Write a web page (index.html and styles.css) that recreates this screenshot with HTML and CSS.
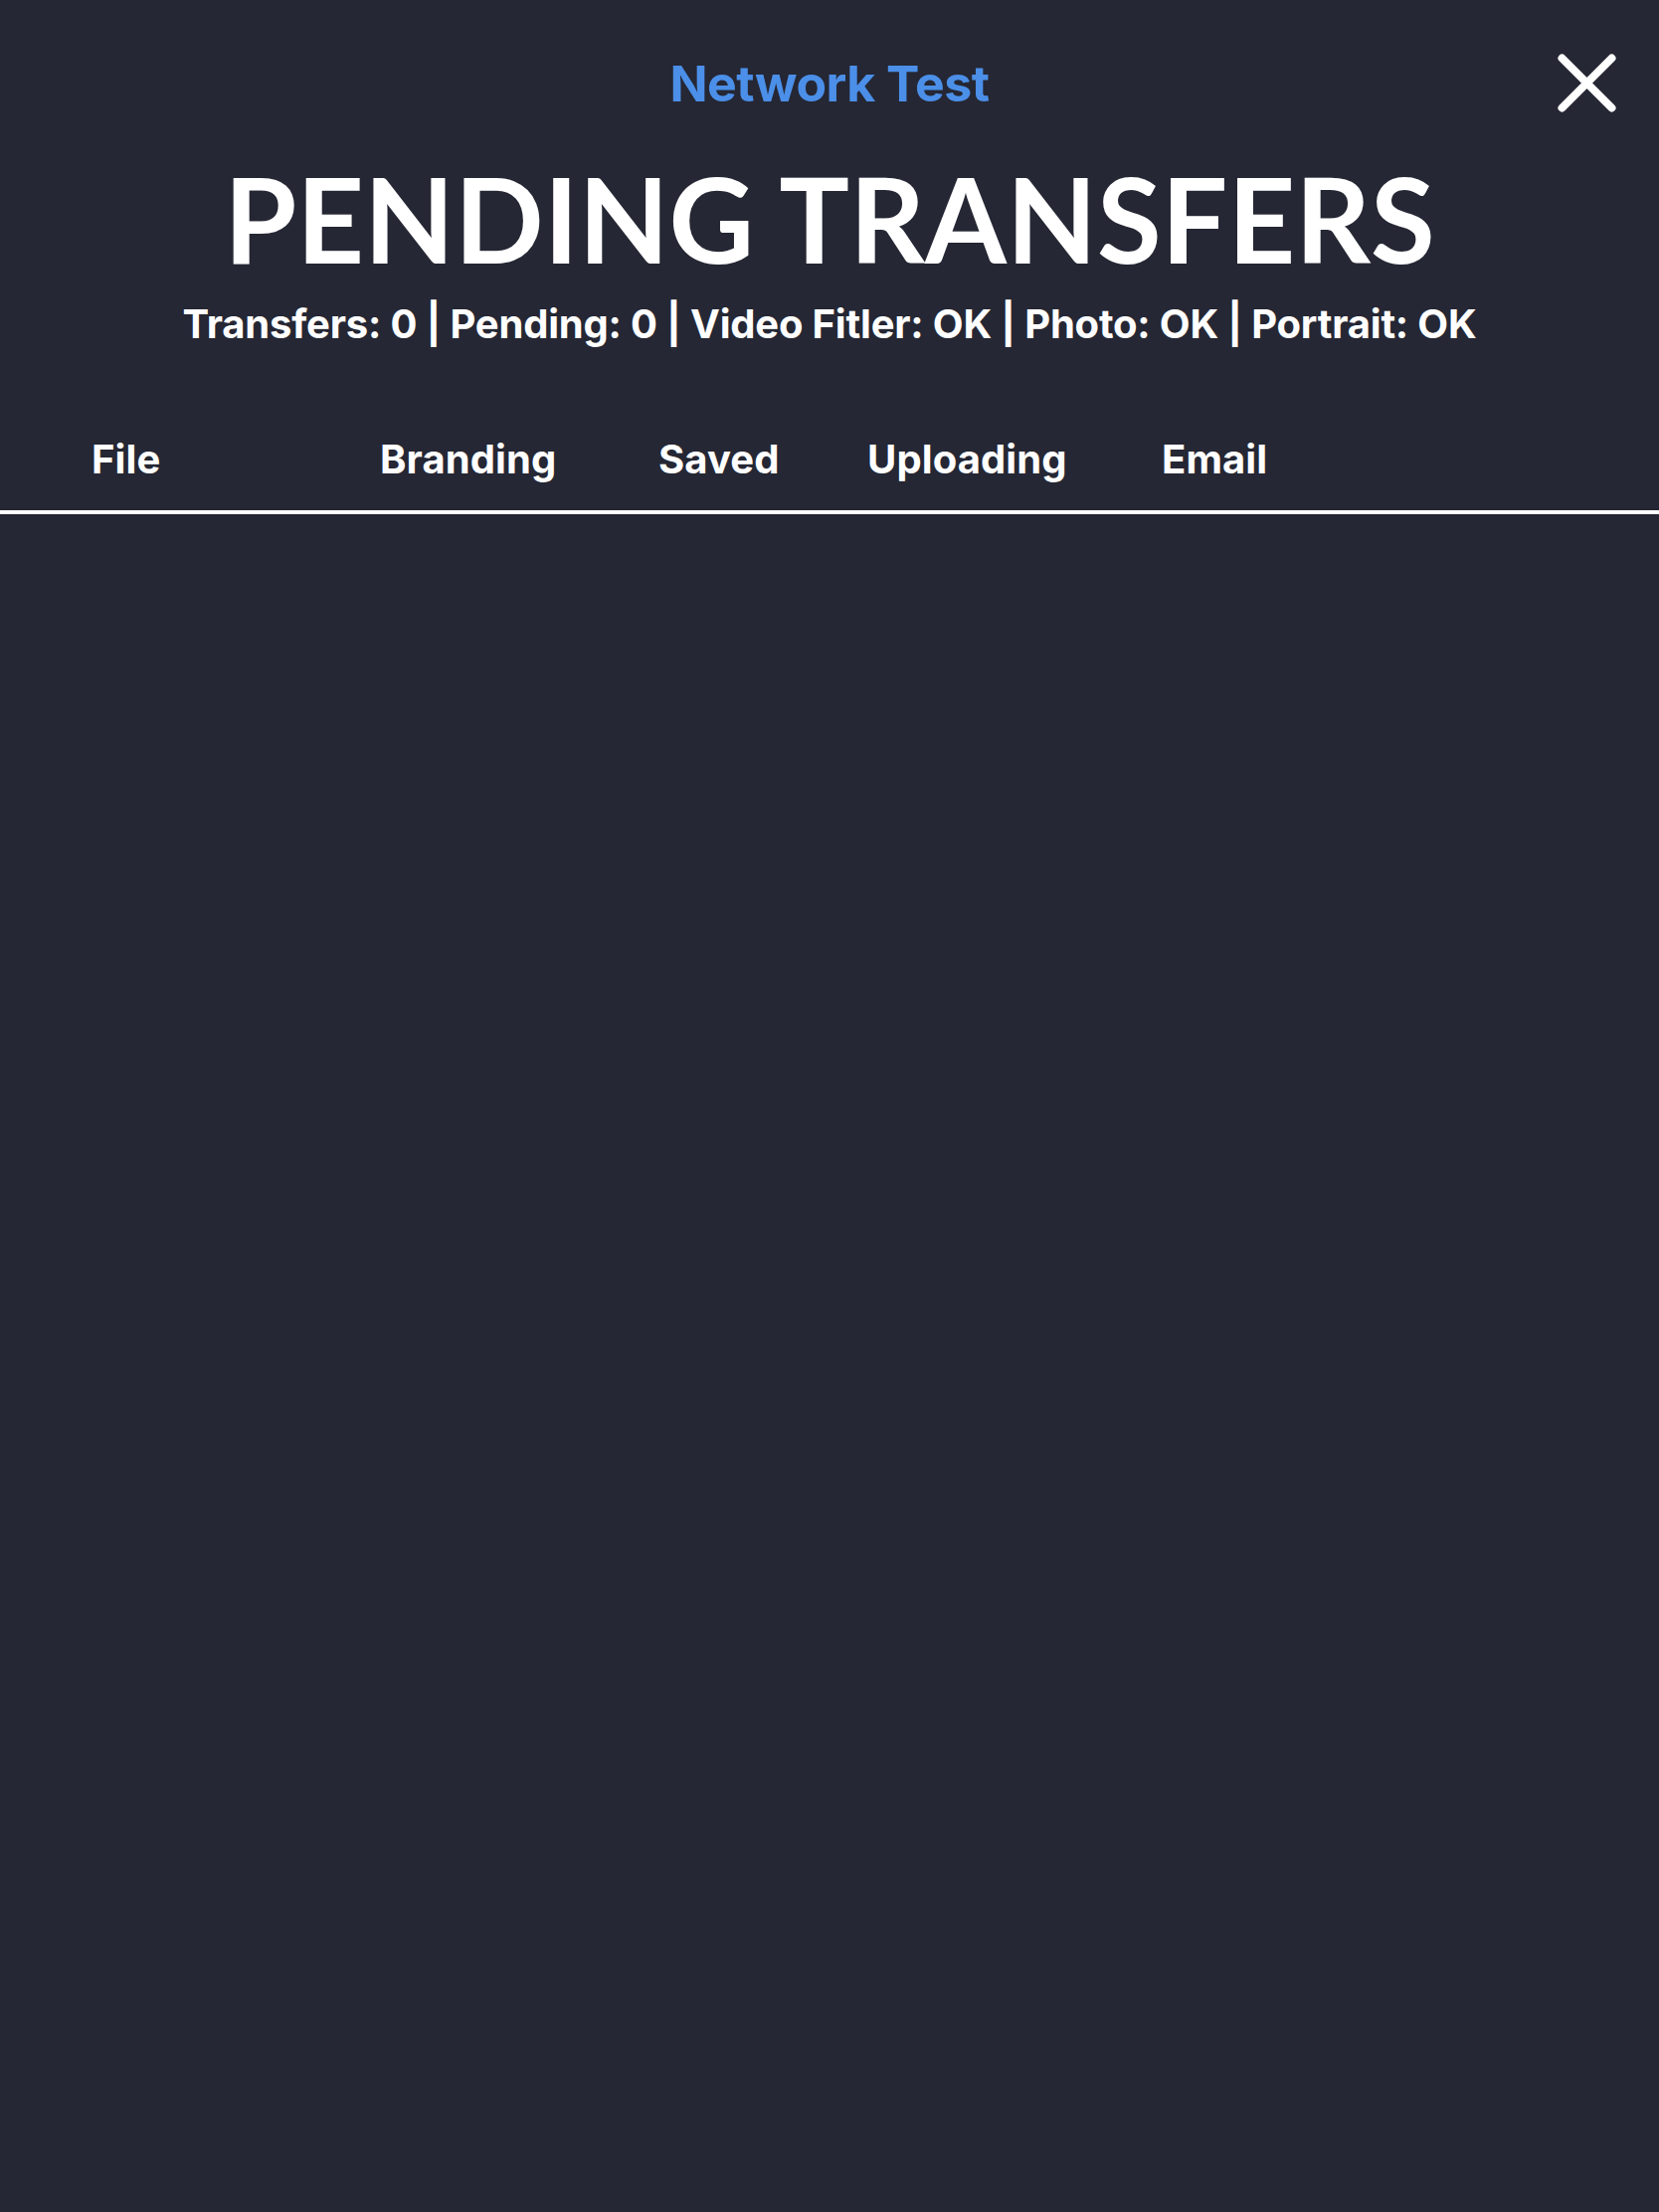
FILE: index.html
```html
<!DOCTYPE html>
<html lang="en">
<head>
<meta charset="utf-8">
<title>Pending Transfers</title>
<link rel="stylesheet" href="styles.css">
</head>
<body>
<div class="screen">
  <header class="top">
    <div class="topbar">
      <div class="spacer"></div>
      <div class="nav-title">Network Test</div>
      <div class="close-wrap">
        <svg class="close" width="59" height="59" viewBox="0 0 59 59" aria-label="Close">
          <path d="M4.5 4.5 L54.5 54.5 M54.5 4.5 L4.5 54.5" stroke="#ffffff" stroke-width="8" stroke-linecap="round" fill="none"/>
        </svg>
      </div>
    </div>
    <h1 class="title">PENDING TRANSFERS</h1>
    <p class="stats">Transfers: 0 | Pending: 0 | Video Fitler: OK | Photo: OK | Portrait: OK</p>
  </header>
  <div class="columns">
    <div class="col">File</div>
    <div class="col">Branding</div>
    <div class="col">Saved</div>
    <div class="col">Uploading</div>
    <div class="col">Email</div>
  </div>
  <div class="divider"></div>
  <main class="list"></main>
</div>
</body>
</html>
```
FILE: styles.css
```css
html, body {
  margin: 0;
  padding: 0;
  background: #252734;
}
.screen {
  width: 1668px;
  height: 2224px;
  background: #252734;
  color: #ffffff;
  font-family: "Inter", "Liberation Sans", sans-serif;
  display: flex;
  flex-direction: column;
  overflow: hidden;
}
.top {
  padding-top: 54px;
  display: flex;
  flex-direction: column;
  align-items: center;
}
.topbar {
  width: 100%;
  display: grid;
  grid-template-columns: 1fr auto 1fr;
  align-items: center;
}
.nav-title {
  font-size: 50px;
  line-height: 1;
  font-weight: 700;
  color: #4b8fe8;
  letter-spacing: -0.5px;
}
.close-wrap {
  display: flex;
  justify-content: flex-end;
  padding-right: 43px;
}
.close {
  display: block;
}
.title {
  margin: 48px 0 0;
  font-family: "Lato", "Liberation Sans", sans-serif;
  font-weight: 700;
  font-size: 118px;
  line-height: 1;
  letter-spacing: 0;
}
.stats {
  margin: 27px 0 0;
  font-size: 40px;
  line-height: 1;
  font-weight: 700;
  letter-spacing: -0.2px;
}
.columns {
  margin-top: 96px;
  display: grid;
  grid-template-columns: 290px 280px 210px 296px auto;
  padding-left: 92px;
  font-size: 40px;
  line-height: 1;
  font-weight: 700;
  letter-spacing: 0.1px;
}
.divider {
  margin-top: 31px;
  height: 4px;
  background: #ffffff;
}
.list {
  flex: 1;
}
```
